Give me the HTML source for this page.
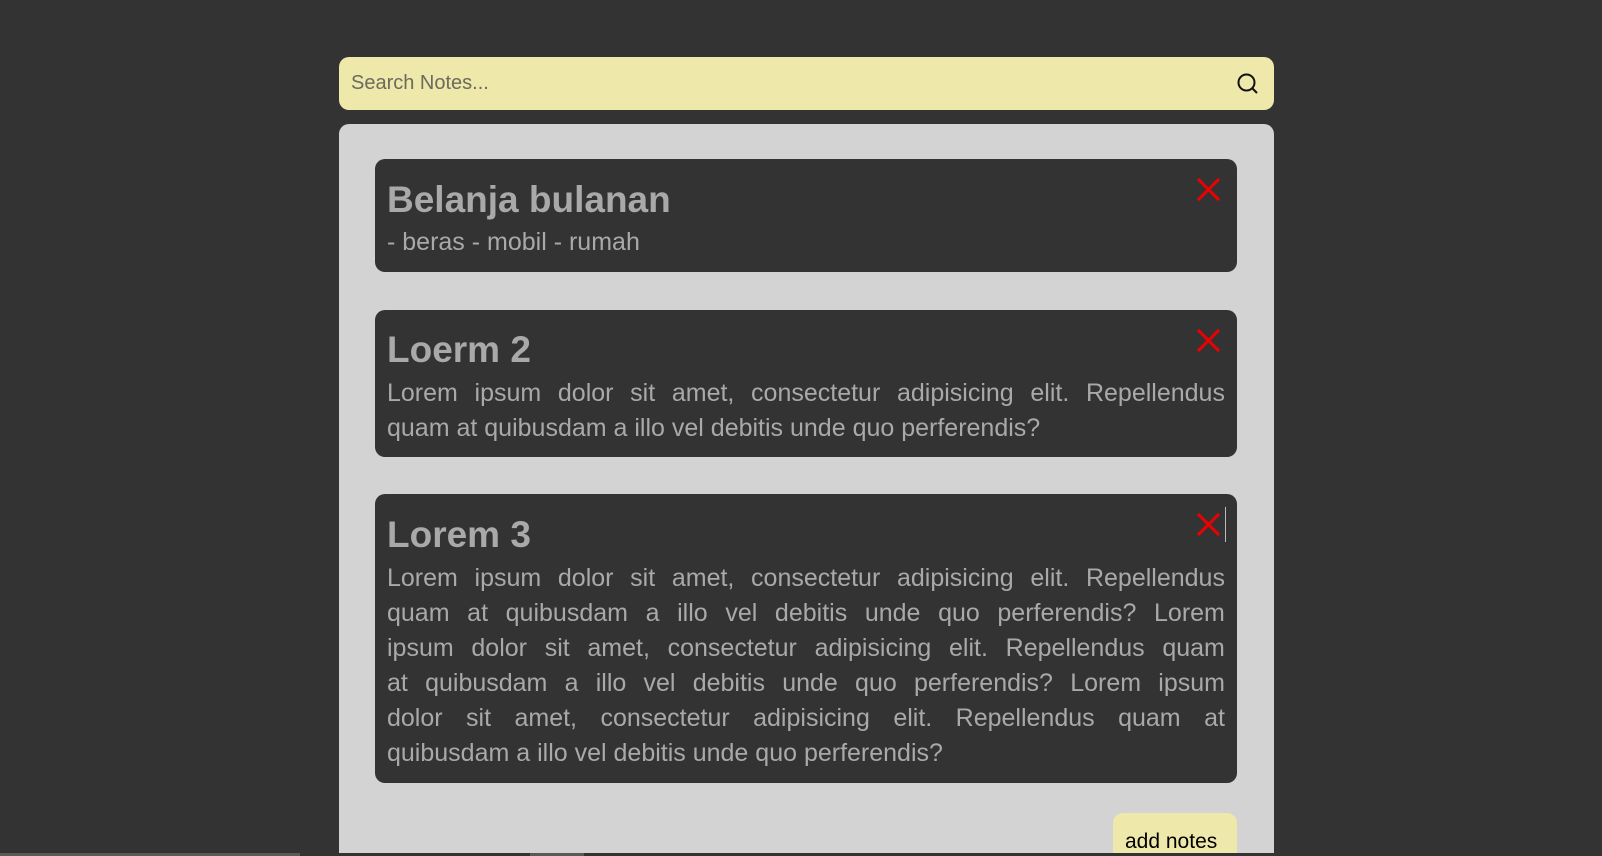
<!DOCTYPE html>
<html style="overflow:hidden;height:856px"><head><meta charset="utf-8"><style>
body{margin:0;width:1602px;height:856px;background:#333;overflow:hidden;position:relative;font-family:"Liberation Sans",sans-serif}
.search{position:absolute;left:339px;top:57px;width:935px;height:53px;background:#eee8aa;border-radius:10px}
.search span{position:absolute;left:12px;top:15px;font-size:20px;color:#6b6b5e}
.search svg{position:absolute;right:14px;top:15px}
.panel{position:absolute;left:339px;top:124px;width:935px;height:732px;background:#d3d3d3;border-radius:10px 10px 0 0;overflow:hidden}
.card{position:absolute;left:36px;width:862px;background:#333;border-radius:10px;color:#a9a9a9}
.card h2{position:absolute;left:12px;margin:0;font-size:37px;font-weight:bold;line-height:40px}
.card .x{position:absolute;left:821px;top:19px}
.l{position:absolute;left:12px;width:838px;font-size:25px;line-height:35px;white-space:nowrap;display:flex;justify-content:space-between}
.last{justify-content:flex-start;gap:7px}
.btn{position:absolute;left:774px;top:689px;width:124px;height:60px;background:#eee8aa;border-radius:10px;font-size:21px;color:#000}
.btn span{position:absolute;left:12px;top:17px}
</style></head><body>
<div class="search"><span>Search Notes...</span>
<svg width="24" height="24" viewBox="0 0 24 24" fill="none" stroke="#111" stroke-width="2"><circle cx="10.5" cy="10.5" r="8"/><path d="M16.5 16.5L21 21"/></svg></div>
<div class="panel">
<div class="card" style="top:35px;height:113px">
<h2 style="top:21px">Belanja bulanan</h2>
<svg class="x" width="25" height="23" viewBox="0 0 25 23" stroke="#e00" stroke-width="3"><path d="M2 1L23 22M23 1L2 22"/></svg>
<div class="l last" style="top:66px">- beras - mobil - rumah</div>
</div>
<div class="card" style="top:186px;height:147px">
<h2 style="top:20px">Loerm 2</h2>
<svg class="x" width="25" height="23" viewBox="0 0 25 23" stroke="#e00" stroke-width="3"><path d="M2 1L23 22M23 1L2 22"/></svg>
<div class="l" style="top:66px"><span>Lorem</span><span>ipsum</span><span>dolor</span><span>sit</span><span>amet,</span><span>consectetur</span><span>adipisicing</span><span>elit.</span><span>Repellendus</span></div>
<div class="l last" style="top:101px">quam at quibusdam a illo vel debitis unde quo perferendis?</div>
</div>
<div class="card" style="top:370px;height:289px">
<h2 style="top:21px">Lorem 3</h2>
<svg class="x" width="25" height="23" viewBox="0 0 25 23" stroke="#e00" stroke-width="3"><path d="M2 1L23 22M23 1L2 22"/></svg>
<div style="position:absolute;left:850px;top:13px;width:1px;height:35px;background:#bbb"></div>
<div class="l" style="top:67px"><span>Lorem</span><span>ipsum</span><span>dolor</span><span>sit</span><span>amet,</span><span>consectetur</span><span>adipisicing</span><span>elit.</span><span>Repellendus</span></div>
<div class="l" style="top:102px"><span>quam</span><span>at</span><span>quibusdam</span><span>a</span><span>illo</span><span>vel</span><span>debitis</span><span>unde</span><span>quo</span><span>perferendis?</span><span>Lorem</span></div>
<div class="l" style="top:137px"><span>ipsum</span><span>dolor</span><span>sit</span><span>amet,</span><span>consectetur</span><span>adipisicing</span><span>elit.</span><span>Repellendus</span><span>quam</span></div>
<div class="l" style="top:172px"><span>at</span><span>quibusdam</span><span>a</span><span>illo</span><span>vel</span><span>debitis</span><span>unde</span><span>quo</span><span>perferendis?</span><span>Lorem</span><span>ipsum</span></div>
<div class="l" style="top:207px"><span>dolor</span><span>sit</span><span>amet,</span><span>consectetur</span><span>adipisicing</span><span>elit.</span><span>Repellendus</span><span>quam</span><span>at</span></div>
<div class="l last" style="top:242px">quibusdam a illo vel debitis unde quo perferendis?</div>
</div>
<div class="btn"><span>add notes</span></div>
</div>
<div style="position:absolute;left:0;top:853px;width:1602px;height:3px;background:#333"></div>
<div style="position:absolute;left:0;top:853px;width:300px;height:3px;background:#5a5a5a"></div>
<div style="position:absolute;left:530px;top:853px;width:54px;height:3px;background:#5a5a5a"></div>
</body></html>
